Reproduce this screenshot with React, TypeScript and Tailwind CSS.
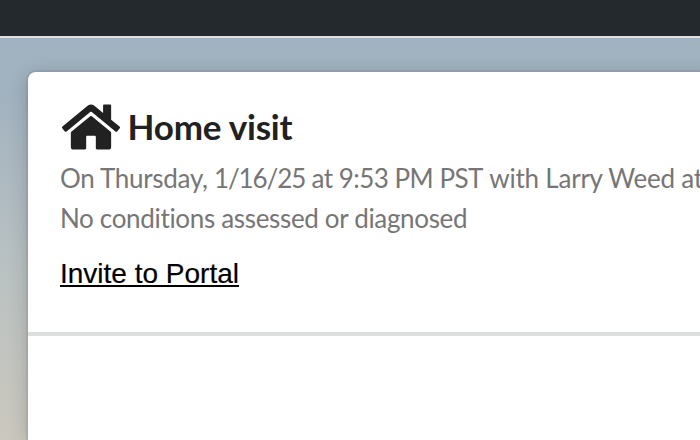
import React from "react";

function HomeIcon() {
  return (
    <svg viewBox="0 0 576 512" className="h-[52px] w-[58px] shrink-0" fill="#212121" aria-hidden="true">
      <path d="M488 312.7V456c0 13.3-10.7 24-24 24H348c-6.6 0-12-5.4-12-12V356c0-6.6-5.4-12-12-12h-72c-6.6 0-12 5.4-12 12v112c0 6.6-5.4 12-12 12H112c-13.3 0-24-10.7-24-24V312.7c0-3.6 1.6-7 4.4-9.3l188-154.8c4.4-3.6 10.8-3.6 15.3 0l188 154.8c2.7 2.3 4.3 5.7 4.3 9.3zm83.6-60.9L488 182.9V44.4c0-6.6-5.4-12-12-12h-56c-6.6 0-12 5.4-12 12V117l-89.5-73.7c-17.7-14.6-43.3-14.6-61 0L4.4 251.8c-5.1 4.2-5.8 11.8-1.6 16.9l25.5 31c4.2 5.1 11.8 5.8 16.9 1.6l235.2-193.7c4.4-3.6 10.8-3.6 15.3 0l235.2 193.7c5.1 4.2 12.7 3.5 16.9-1.6l25.5-31c4.2-5.2 3.4-12.7-1.7-16.9z" />
    </svg>
  );
}

export default function App() {
  return (
    <div className="flex h-[440px] w-[700px] flex-col overflow-hidden bg-linear-to-b from-[#a1b2c0] from-20% via-[#b9c1c2] via-60% to-[#cbc8be] font-['Lato',sans-serif]">
      <header className="h-[38px] shrink-0 border-b-2 border-[#e0e0e0] bg-[#24292d]" />
      <main className="mt-[34px] ml-7 w-[700px] grow rounded-tl-[8px] bg-white shadow-[0_4px_20px_rgba(34,36,38,0.24),0_0_0_2px_rgba(34,36,38,0.07)]">
        <section className="h-[264px] border-b-4 border-[#dddede] pt-[27px] pl-8">
          <div className="flex h-[54px] items-center">
            <div className="mt-px mr-2 ml-[1.5px]">
              <HomeIcon />
            </div>
            <h1 className="text-[35px] leading-[54px] font-bold tracking-[-0.2px] whitespace-nowrap text-[#212121]">Home visit</h1>
          </div>
          <p className="pt-[5px] text-[26px] leading-10 tracking-[-0.3px] whitespace-nowrap text-[#767676]">
            On Thursday, <span className="tracking-[-1.1px]">1/16/25</span>{" "}
            <span className="tracking-[-0.52px]">at 9:53 PM PST</span> <span className="tracking-[-0.22px]">with Larry Weed at</span>
          </p>
          <p className="text-[26px] leading-10 tracking-[-0.33px] whitespace-nowrap text-[#767676]">No conditions assessed or diagnosed</p>
          <a
            href="#"
            className="mt-4 inline-block font-['Liberation_Sans',Arial,sans-serif] text-[28px] leading-10 text-black underline decoration-2 underline-offset-2 [text-decoration-skip-ink:none] [-webkit-text-stroke:0.2px_black]"
          >
            Invite to Portal
          </a>
        </section>
      </main>
    </div>
  );
}
